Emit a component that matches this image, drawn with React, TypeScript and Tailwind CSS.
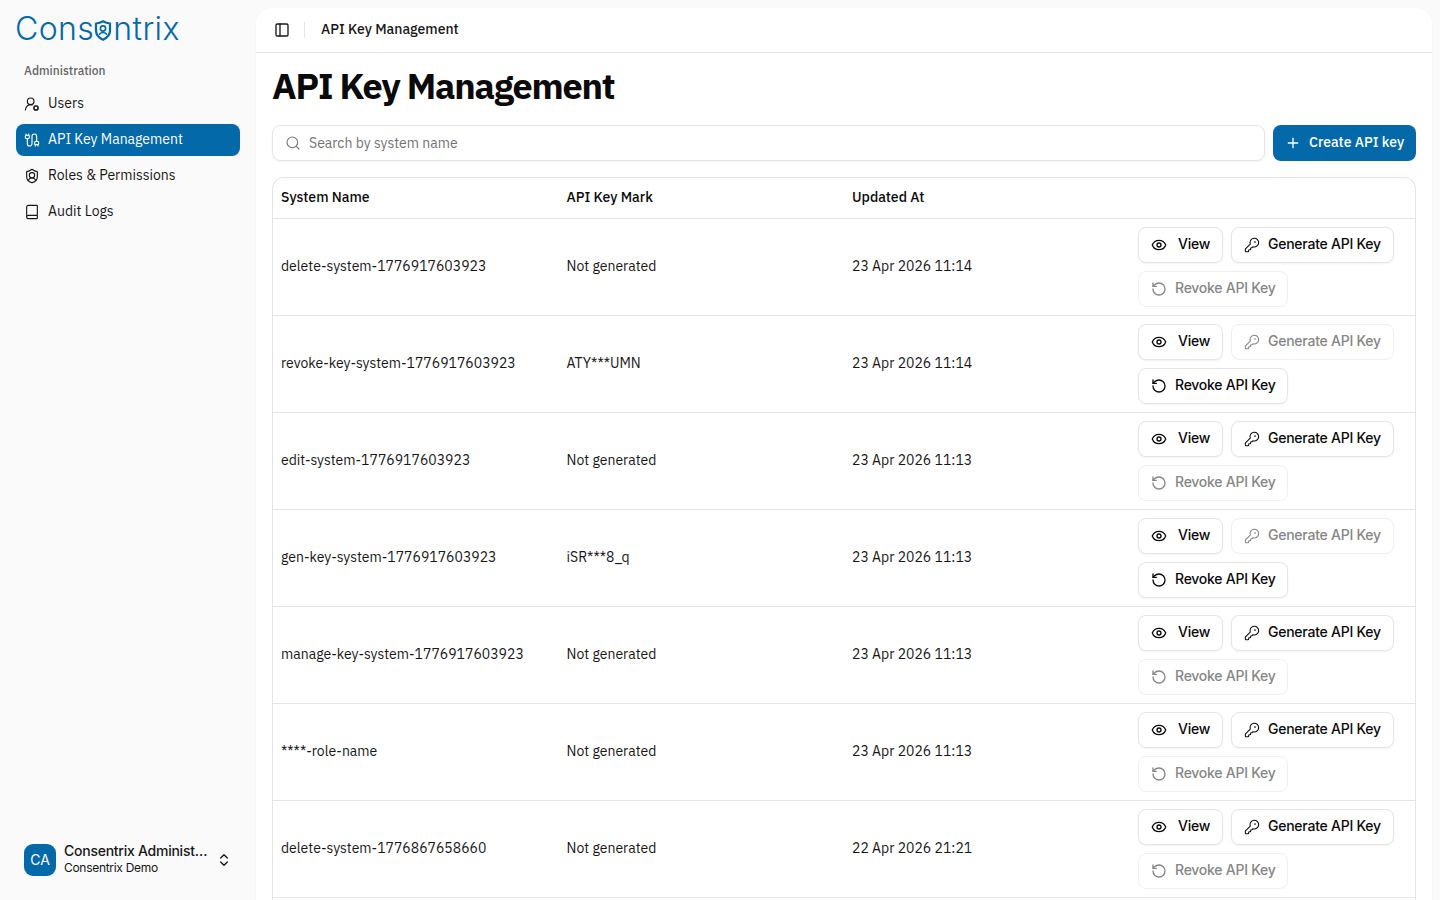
import { Book, Cable, ChevronsUpDown, Eye, KeyRound, PanelLeft, Plus, RotateCcw, Search, ShieldUser, UserRoundCog } from "lucide-react";

const plex = "font-['IBM_Plex_Sans','Noto_Sans','Liberation_Sans',sans-serif]";

type Row = { name: string; mark: string; updated: string; hasKey?: boolean };

const rows: Row[] = [
  { name: "delete-system-1776917603923", mark: "Not generated", updated: "23 Apr 2026 11:14" },
  { name: "revoke-key-system-1776917603923", mark: "ATY***UMN", updated: "23 Apr 2026 11:14", hasKey: true },
  { name: "edit-system-1776917603923", mark: "Not generated", updated: "23 Apr 2026 11:13" },
  { name: "gen-key-system-1776917603923", mark: "iSR***8_q", updated: "23 Apr 2026 11:13", hasKey: true },
  { name: "manage-key-system-1776917603923", mark: "Not generated", updated: "23 Apr 2026 11:13" },
  { name: "****-role-name", mark: "Not generated", updated: "23 Apr 2026 11:13" },
  { name: "delete-system-1776867658660", mark: "Not generated", updated: "22 Apr 2026 21:21" },
];

const LogoMark = () => (
  <svg width="18" height="21" viewBox="0 0 18 21" fill="none" className="mt-[5px] shrink-0">
    <path d="M9 1.3c2.6 1.5 4.7 2 7 2.2v7c0 4.4-3 7.4-7 9.2-4-1.8-7-4.8-7-9.2v-7c2.3-.2 4.4-.7 7-2.2Z" stroke="#0369a8" strokeWidth="2.2" strokeLinejoin="round" />
    <circle cx="9" cy="8.5" r="2.6" stroke="#0369a8" strokeWidth="1.6" />
    <path d="M5.5 14.2c1-1.2 2.2-1.7 3.5-1.7s2.5.5 3.5 1.7" stroke="#0369a8" strokeWidth="1.6" strokeLinecap="round" />
  </svg>
);

const Logo = () => (
  <div className="flex h-[40px] items-center pl-[15px] font-['Inter',sans-serif] text-[32px] leading-none font-light tracking-[0.4px] text-[#0369a8]">
    <span className="mt-[1px]">Cons</span>
    <LogoMark />
    <span className="mt-[1px] ml-[1px]">ntrix</span>
  </div>
);

const NavItem = ({ icon, label, active }: { icon: React.ReactNode; label: string; active?: boolean }) => (
  <div
    className={`flex h-8 items-center gap-2 rounded-lg px-2 text-sm ${
      active ? "bg-[#0369a8] text-white" : "text-[#171717]"
    }`}
  >
    <span className="flex w-4 justify-center">{icon}</span>
    <span className="mb-[2px]">{label}</span>
  </div>
);

const ActionButton = ({ icon, label, disabled, className }: { icon: React.ReactNode; label: string; disabled?: boolean; className?: string }) => (
  <div
    className={`flex h-9 items-center rounded-lg border bg-white font-['Inter',sans-serif] text-sm font-medium tracking-[-0.25px] ${
      disabled ? "border-[#f0f0f0] text-[#868686]" : "border-[#e5e5e5] text-[#0a0a0a] shadow-xs"
    } ${className ?? ""}`}
  >
    {icon}
    <span className="mb-[2px]">{label}</span>
  </div>
);

const TableRow = ({ row }: { row: Row }) => (
  <div className="grid h-[97px] grid-cols-[285.5px_285.5px_286px_1fr] items-center border-t border-[#e5e5e5] pl-2 text-sm text-[#171717]">
    <span className="mb-[2px]">{row.name}</span>
    <span className="mb-[2px]">{row.mark}</span>
    <span className="mb-[2px]">{row.updated}</span>
    <div className="flex flex-col gap-2">
      <div className="flex gap-2">
        <ActionButton
          className="w-[85px] gap-[11px] pl-[12px]"
          icon={<Eye size={16} strokeWidth={2} />}
          label="View"
        />
        <ActionButton
          className="w-[163px] gap-[8px] pl-[12px]"
          icon={<KeyRound size={16} strokeWidth={1.6} />}
          label="Generate API Key"
          disabled={row.hasKey}
        />
      </div>
      <ActionButton
        className="w-[150px] gap-[8px] pl-[12px]"
        icon={<RotateCcw size={16} strokeWidth={2} />}
        label="Revoke API Key"
        disabled={!row.hasKey}
      />
    </div>
  </div>
);

export default function App() {
  return (
    <div className={`flex h-[900px] w-[1440px] overflow-hidden bg-[#fafafa] ${plex}`}>
      <aside className="flex w-[256px] shrink-0 flex-col pt-2">
        <Logo />
        <div className="px-4 pt-[7px]">
          <div className="flex h-[33px] items-center px-2 pb-[2px] text-xs font-medium text-[#666666]">Administration</div>
          <nav className="flex flex-col gap-1">
            <NavItem icon={<UserRoundCog size={16} strokeWidth={1.7} />} label="Users" />
            <NavItem icon={<Cable size={16} strokeWidth={1.7} />} label="API Key Management" active />
            <NavItem icon={<ShieldUser size={16} strokeWidth={1.7} />} label="Roles & Permissions" />
            <NavItem icon={<Book size={16} strokeWidth={1.7} />} label="Audit Logs" />
          </nav>
        </div>
        <div className="mt-auto flex items-center px-6 pb-[22px]">
          <div className="flex h-8 w-8 shrink-0 items-center justify-center rounded-[9px] bg-[#0369a8] pb-[1px] font-['Inter',sans-serif] text-sm text-white">
            CA
          </div>
          <div className="mb-[2px] ml-2 w-[144px] font-['Inter',sans-serif] text-[#171717]">
            <div className="truncate text-sm leading-[18px] font-medium tracking-[-0.25px]">Consentrix Administrator</div>
            <div className="text-xs leading-[16px] tracking-[-0.3px]">Consentrix Demo</div>
          </div>
          <ChevronsUpDown size={16} className="ml-2 text-[#171717]" />
        </div>
      </aside>
      <main className="mt-2 mr-2 flex min-w-0 flex-1 flex-col rounded-t-2xl bg-white shadow-xs">
        <header className="flex h-[45px] shrink-0 items-center border-b border-[#e5e5e5] pl-[18px]">
          <PanelLeft size={16} className="text-[#171717]" />
          <div className="mr-[16px] ml-[14px] h-4 w-px bg-[#e5e5e5]" />
          <span className="mb-[2px] text-sm font-medium text-[#171717]">API Key Management</span>
        </header>
        <div className="flex min-h-0 flex-1 flex-col px-4">
          <h1 className="pt-[10px] text-[36px] leading-[45px] font-bold tracking-[-1.18px] text-[#0a0a0a]">API Key Management</h1>
          <div className="mt-[17px] flex gap-2">
            <div className="flex h-9 flex-1 items-center gap-2 rounded-lg border border-[#e5e5e5] pl-3 text-sm text-[#737373] shadow-xs">
              <Search size={16} strokeWidth={1.6} />
              <span>Search by system name</span>
            </div>
            <div className="flex h-9 w-[143px] items-center gap-2 rounded-lg bg-[#0369a8] pl-[12px] text-sm font-medium text-white">
              <Plus size={16} />
              <span className="mb-[2px]">Create API key</span>
            </div>
          </div>
          <div className="mt-4 rounded-t-xl border border-b-0 border-[#e5e5e5]">
            <div className="grid h-10 grid-cols-[285.5px_285.5px_286px_1fr] items-center pb-[2px] pl-2 text-sm font-medium text-[#0a0a0a]">
              <span>System Name</span>
              <span>API Key Mark</span>
              <span>Updated At</span>
            </div>
            {rows.map((row) => (
              <TableRow key={row.name} row={row} />
            ))}
            <div className="h-10 border-t border-[#e5e5e5]" />
          </div>
        </div>
      </main>
    </div>
  );
}
